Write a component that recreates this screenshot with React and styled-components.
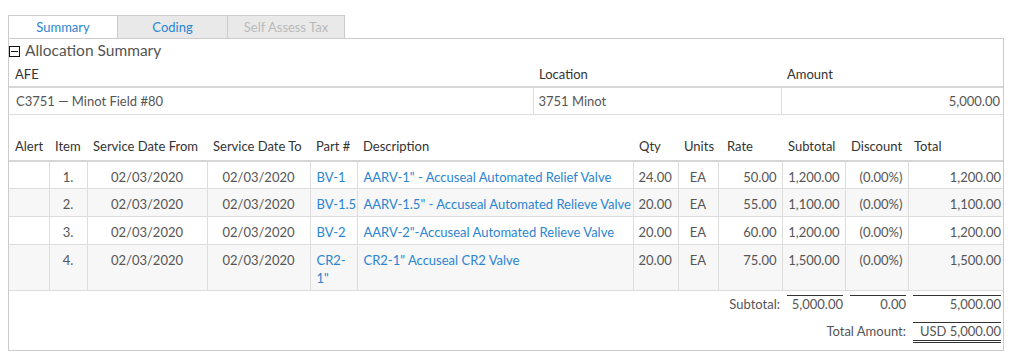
import React from 'react';
import styled, { createGlobalStyle } from 'styled-components';

const GlobalStyle = createGlobalStyle`
  body {
    margin: 8px;
    background: #fff;
    font-family: Lato, "Liberation Sans", sans-serif;
    color: #555;
  }
`;

const Wrapper = styled.div`
  width: 996px;
  padding-top: 7px;
  font-size: 13px;
`;

const Tabs = styled.div`
  display: flex;
  height: 23px;
`;

const Tab = styled.div`
  width: ${(p) => p.width}px;
  box-sizing: border-box;
  border: 1px solid #ccc;
  border-bottom: none;
  margin-left: -1px;
  &:first-child { margin-left: 0; }
  display: flex;
  align-items: center;
  justify-content: center;
  font-size: 13px;
  background: ${(p) => (p.active ? '#fff' : '#e9e9e9')};
  color: ${(p) => (p.disabled ? '#b9b9b9' : '#2a84d2')};
`;

const Panel = styled.div`
  border: 1px solid #ccc;
  height: 313px;
  box-sizing: border-box;
`;

const SectionHeader = styled.div`
  display: flex;
  align-items: center;
  gap: 5px;
  height: 22px;
  font-size: 15.5px;
  color: #555;
`;

const CollapseIcon = styled.span`
  width: 9px;
  height: 9px;
  border: 1px solid #111;
  position: relative;
  margin-top: 3px;
  &::after {
    content: '';
    position: absolute;
    left: 1px;
    right: 1px;
    top: 4px;
    height: 1px;
    background: #111;
  }
`;

const Table = styled.table`
  width: 100%;
  border-collapse: collapse;
  table-layout: fixed;
  margin-top: ${(p) => p.gap || 0}px;
`;

const Th = styled.th`
  text-align: left;
  font-weight: normal;
  font-size: 13px;
  color: #333;
  padding: 0 6px;
  height: ${(p) => p.h || 25}px;
  border-bottom: 2px solid #d6d6d6;
  white-space: nowrap;
`;

const Td = styled.td`
  height: ${(p) => p.h || 27}px;
  padding: ${(p) => (p.top ? '6px 5px 0' : '0 5px')};
  vertical-align: ${(p) => (p.top ? 'top' : 'middle')};
  text-align: ${(p) => p.align || 'left'};
  border-bottom: 1px solid #ddd;
  border-left: 1px solid #ddd;
  box-sizing: border-box;
  line-height: 18px;
  &:first-child { border-left: none; }
`;

const PartCell = styled(Td)`
  padding-left: 6px;
  padding-right: 0;
  white-space: pre-line;
`;

const DescCell = styled(Td)`
  padding-left: 6px;
  white-space: nowrap;
`;

const Row = styled.tr`
  background: ${(p) => (p.alt ? '#f7f7f7' : '#fff')};
`;

const Link = styled.span`
  color: #2a84d2;
`;

const FootCell = styled.td`
  text-align: right;
  padding: 4px 2px 0 5px;
  height: ${(p) => p.h || 27}px;
  box-sizing: border-box;
  vertical-align: top;
  white-space: nowrap;
`;

const Figure = styled.div`
  border-top: 1px solid #333;
  line-height: 16px;
  ${(p) => p.double && 'border-bottom: 3px double #333; padding-bottom: 1px;'}
`;

const Label = styled.div`
  padding-top: 1px;
  line-height: 16px;
`;

const items = [
  { n: '1.', part: 'BV-1', desc: 'AARV-1" - Accuseal Automated Relief Valve', qty: '24.00', rate: '50.00', sub: '1,200.00', total: '1,200.00' },
  { n: '2.', part: 'BV-1.5', desc: 'AARV-1.5" - Accuseal Automated Relieve Valve', qty: '20.00', rate: '55.00', sub: '1,100.00', total: '1,100.00' },
  { n: '3.', part: 'BV-2', desc: 'AARV-2"-Accuseal Automated Relieve Valve', qty: '20.00', rate: '60.00', sub: '1,200.00', total: '1,200.00' },
  { n: '4.', part: 'CR2-\n1"', desc: 'CR2-1" Accuseal CR2 Valve', qty: '20.00', rate: '75.00', sub: '1,500.00', total: '1,500.00', tall: true },
];

const cols = [40, 38, 120, 103, 47, 276, 45, 40, 64, 63, 63, 95];

export default function App() {
  return (
    <Wrapper>
      <GlobalStyle />
      <Tabs>
        <Tab width={110} active>Summary</Tab>
        <Tab width={111}>Coding</Tab>
        <Tab width={118} disabled>Self Assess Tax</Tab>
      </Tabs>
      <Panel>
        <SectionHeader>
          <CollapseIcon />
          Allocation Summary
        </SectionHeader>
        <Table>
          <colgroup>
            <col style={{ width: 524 }} />
            <col style={{ width: 248 }} />
            <col />
          </colgroup>
          <thead>
            <tr>
              <Th>AFE</Th>
              <Th>Location</Th>
              <Th>Amount</Th>
            </tr>
          </thead>
          <tbody>
            <tr>
              <Td style={{ paddingLeft: 7 }}>C3751 — Minot Field #80</Td>
              <Td>3751 Minot</Td>
              <Td align="right" style={{ paddingRight: 3 }}>5,000.00</Td>
            </tr>
          </tbody>
        </Table>
        <Table gap={18}>
          <colgroup>
            {cols.map((w, i) => (
              <col key={i} style={{ width: w }} />
            ))}
          </colgroup>
          <thead>
            <tr>
              <Th h={27}>Alert</Th>
              <Th h={27}>Item</Th>
              <Th h={27}>Service Date From</Th>
              <Th h={27}>Service Date To</Th>
              <Th h={27}>Part #</Th>
              <Th h={27}>Description</Th>
              <Th h={27}>Qty</Th>
              <Th h={27}>Units</Th>
              <Th h={27} style={{ paddingLeft: 9 }}>Rate</Th>
              <Th h={27}>Subtotal</Th>
              <Th h={27}>Discount</Th>
              <Th h={27}>Total</Th>
            </tr>
          </thead>
          <tbody>
            {items.map((it, i) => (
              <Row key={it.n} alt={i % 2 === 1}>
                <Td top h={it.tall ? 46 : 28} />
                <Td top align="center">{it.n}</Td>
                <Td top align="center">02/03/2020</Td>
                <Td top align="center">02/03/2020</Td>
                <PartCell top><Link>{it.part}</Link></PartCell>
                <DescCell top><Link>{it.desc}</Link></DescCell>
                <Td top>{it.qty}</Td>
                <Td top align="center">EA</Td>
                <Td top align="right">{it.rate}</Td>
                <Td top align="right">{it.sub}</Td>
                <Td top align="right">(0.00%)</Td>
                <Td top align="right" style={{ paddingRight: 2 }}>{it.total}</Td>
              </Row>
            ))}
          </tbody>
          <tfoot>
            <tr>
              <FootCell colSpan={9}><Label>Subtotal:</Label></FootCell>
              <FootCell><Figure>5,000.00</Figure></FootCell>
              <FootCell><Figure>0.00</Figure></FootCell>
              <FootCell><Figure>5,000.00</Figure></FootCell>
            </tr>
            <tr>
              <FootCell colSpan={11} h={28}><Label>Total Amount:</Label></FootCell>
              <FootCell h={28}><Figure double>USD 5,000.00</Figure></FootCell>
            </tr>
          </tfoot>
        </Table>
      </Panel>
    </Wrapper>
  );
}
